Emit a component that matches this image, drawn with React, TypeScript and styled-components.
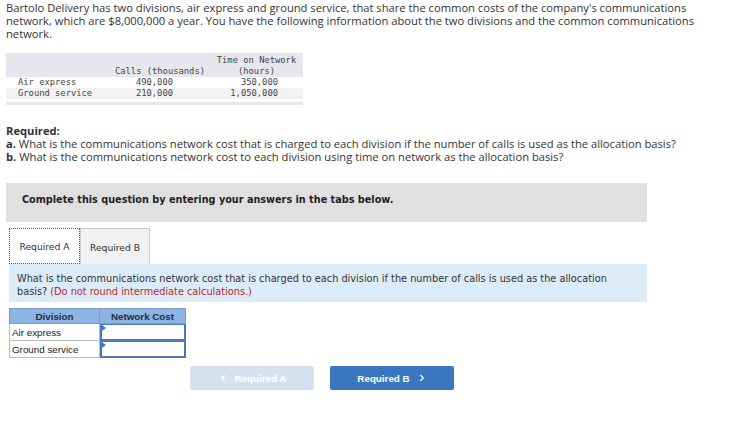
import React from "react";
import styled, { createGlobalStyle } from "styled-components";
import { ChevronLeft, ChevronRight } from "lucide-react";

const GlobalStyle = createGlobalStyle`
  body {
    margin: 0;
    background: #fff;
  }
`;

const Page = styled.div`
  padding: 0 6px;
  width: 736px;
  box-sizing: border-box;
  font-family: "Open Sans", Lato, sans-serif;
  color: #333;
`;

const Intro = styled.p`
  margin: 0;
  font-size: 11.2px;
  line-height: 13px;
  padding-top: 1px;
  padding-right: 22px;
`;

const DataTable = styled.div`
  margin-top: 13px;
  width: 297px;
  display: grid;
  grid-template-columns: 108px 96px 93px;
  font-family: "DejaVu Sans Mono", "Liberation Mono", monospace;
  font-size: 8.8px;
  line-height: 11px;
  color: #444;
`;

const HeadCell = styled.div<{ $align?: string; $pad?: number }>`
  background: #e6e7ee;
  text-align: ${(p) => p.$align || "left"};
  padding-right: ${(p) => p.$pad || 0}px;
  padding-top: 1px;
  display: flex;
  flex-direction: column;
  justify-content: flex-end;
  height: 23px;
`;

const Cell = styled.div<{ $align?: string; $pad?: number; $shade?: boolean }>`
  background: ${(p) => (p.$shade ? "#f3f3f5" : "#fff")};
  text-align: ${(p) => p.$align || "left"};
  padding-left: ${(p) => (p.$align ? 0 : 12)}px;
  padding-right: ${(p) => p.$pad || 0}px;
  height: 11px;
`;

const TableFoot = styled.div`
  grid-column: 1 / 4;
  margin-top: 3px;
  height: 3px;
  background: #e6e7ee;
`;

const Required = styled.div`
  margin-top: 19px;
  font-size: 11.2px;
  line-height: 13px;
`;

const Bold = styled.span`
  font-weight: 700;
`;

const Instructions = styled.div`
  margin-top: 20px;
  width: 641px;
  height: 39px;
  box-sizing: border-box;
  background: #e0e0e0;
  padding: 11px 16px 0;
  font-family: "DejaVu Sans", Verdana, sans-serif;
  font-weight: 700;
  font-size: 9.7px;
  color: #222;
`;

const TabArea = styled.div`
  margin: 6px 0 0 3px;
  width: 638px;
  font-family: "DejaVu Sans", Verdana, sans-serif;
`;

const TabRow = styled.div`
  display: flex;
`;

const Tab = styled.div<{ $active?: boolean }>`
  width: ${(p) => (p.$active ? 71 : 70)}px;
  height: 36px;
  box-sizing: border-box;
  display: flex;
  align-items: center;
  justify-content: center;
  font-size: 9.2px;
  color: #333;
  background: ${(p) => (p.$active ? "#fff" : "#f1f1f1")};
  border: 1px ${(p) => (p.$active ? "dotted #2f62b0" : "solid #c9c9c9")};
  border-bottom: ${(p) => (p.$active ? "1px dotted #2f62b0" : "none")};
  padding-top: 1px;
`;

const Prompt = styled.div`
  background: #dcebf8;
  height: 38px;
  box-sizing: border-box;
  padding: 8px 30px 0 8px;
  font-size: 9.75px;
  line-height: 13px;
  color: #333;
`;

const Note = styled.span`
  color: #c1272d;
`;

const AnswerTable = styled.div`
  margin-top: 6px;
  display: grid;
  grid-template-columns: 91px 86px;
  width: 177px;
  font-family: "Liberation Sans", Arial, sans-serif;
  font-size: 9.8px;
  color: #222;
`;

const AnsHead = styled.div<{ $first?: boolean }>`
  height: 16px;
  box-sizing: border-box;
  background: #8db4e2;
  border: 1px solid #7b9fcd;
  border-left: ${(p) => (p.$first ? "1px solid #7b9fcd" : "none")};
  display: flex;
  align-items: center;
  justify-content: center;
  font-weight: 700;
  color: #1f2d44;
`;

const AnsLabel = styled.div`
  height: 17px;
  box-sizing: border-box;
  border: 1px solid #bdbdbd;
  border-top: none;
  display: flex;
  align-items: center;
  padding-left: 2px;
`;

const AnsInput = styled.div`
  position: relative;
  height: 17px;
  box-sizing: border-box;
  border: 2px solid #4a78b8;
  border-top-width: 1px;
  background: #fff;

  &::before {
    content: "";
    position: absolute;
    left: 0;
    top: 0;
    border-top: 3px solid transparent;
    border-bottom: 3px solid transparent;
    border-left: 4px solid #3c78d8;
  }
`;

const NavRow = styled.div`
  display: flex;
  gap: 16px;
  margin: 8px 0 0 181px;
`;

const NavButton = styled.div<{ $primary?: boolean }>`
  width: 124px;
  height: 24px;
  display: flex;
  align-items: center;
  justify-content: center;
  gap: 7px;
  border-radius: 2px;
  background: ${(p) => (p.$primary ? "#3a77bf" : "#d5e1ef")};
  color: #fff;
  font-family: "Liberation Sans", Arial, sans-serif;
  font-weight: 700;
  font-size: 9.8px;
`;

const rows = [
  { name: "Air express", calls: "490,000", time: "350,000" },
  { name: "Ground service", calls: "210,000", time: "1,050,000" },
];

const App: React.FC = () => {
  return (
    <>
      <GlobalStyle />
      <Page>
        <Intro>
          Bartolo Delivery has two divisions, air express and ground service, that share the common costs of the
          company's communications network, which are $8,000,000 a year. You have the following information about the
          two divisions and the common communications network.
        </Intro>

        <DataTable>
          <HeadCell />
          <HeadCell $align="right" $pad={5}>
            Calls (thousands)
          </HeadCell>
          <HeadCell $align="center" $pad={0}>
            <span>Time on Network</span>
            <span>(hours)</span>
          </HeadCell>
          {rows.map((r, i) => (
            <React.Fragment key={r.name}>
              <Cell $shade={i === 1}>{r.name}</Cell>
              <Cell $shade={i === 1} $align="right" $pad={37}>
                {r.calls}
              </Cell>
              <Cell $shade={i === 1} $align="right" $pad={25}>
                {r.time}
              </Cell>
            </React.Fragment>
          ))}
          <TableFoot />
        </DataTable>

        <Required>
          <Bold>Required:</Bold>
          <div>
            <Bold>a.</Bold> What is the communications network cost that is charged to each division if the number of
            calls is used as the allocation basis?
          </div>
          <div>
            <Bold>b.</Bold> What is the communications network cost to each division using time on network as the
            allocation basis?
          </div>
        </Required>

        <Instructions>Complete this question by entering your answers in the tabs below.</Instructions>

        <TabArea>
          <TabRow>
            <Tab $active>Required A</Tab>
            <Tab>Required B</Tab>
          </TabRow>
          <Prompt>
            What is the communications network cost that is charged to each division if the number of calls is used as
            the allocation basis? <Note>(Do not round intermediate calculations.)</Note>
          </Prompt>

          <AnswerTable>
            <AnsHead $first>Division</AnsHead>
            <AnsHead>Network Cost</AnsHead>
            {rows.map((r) => (
              <React.Fragment key={r.name}>
                <AnsLabel>{r.name}</AnsLabel>
                <AnsInput />
              </React.Fragment>
            ))}
          </AnswerTable>

          <NavRow>
            <NavButton>
              <ChevronLeft size={10} strokeWidth={3} />
              Required A
            </NavButton>
            <NavButton $primary>
              Required B
              <ChevronRight size={10} strokeWidth={3} />
            </NavButton>
          </NavRow>
        </TabArea>
      </Page>
    </>
  );
};

export default App;
